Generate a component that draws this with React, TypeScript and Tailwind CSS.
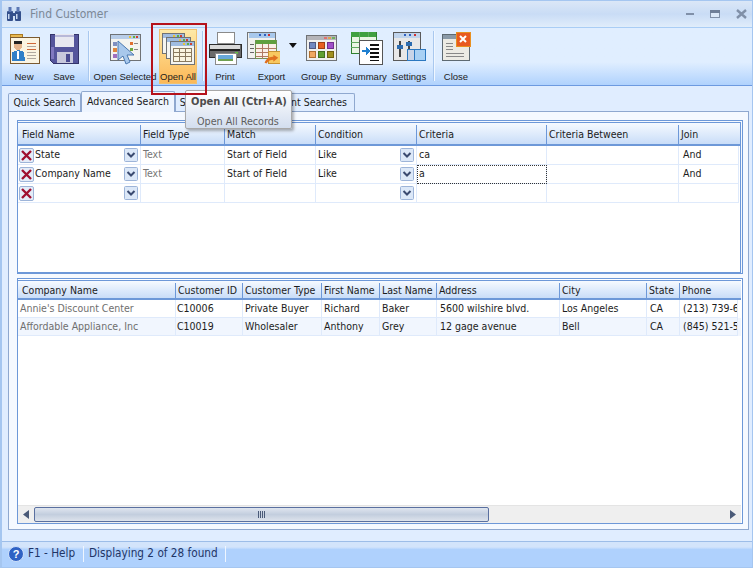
import React from "react";

const Shadowed = ({ children }: { children: React.ReactNode }) => (
  <svg width="34" height="34" viewBox="0 0 34 34" shapeRendering="crispEdges">{children}</svg>
);

const WinFrame = ({ x = 2, y = 3, w = 28, h = 26, bar = "#9db8dc" }: { x?: number; y?: number; w?: number; h?: number; bar?: string }) => (
  <g>
    <rect x={x} y={y} width={w} height={h} fill="#f4f4f0" stroke="#6f7275" />
    <rect x={x + 1} y={y + 1} width={w - 1} height={4} fill={bar} />
    <rect x={x + w - 11} y={y + 2} width={2} height={2} fill="#e8c23a" />
    <rect x={x + w - 7} y={y + 2} width={2} height={2} fill="#60b040" />
    <rect x={x + w - 4} y={y + 2} width={2} height={2} fill="#d04030" />
  </g>
);

const NewIcon = () => (
  <Shadowed>
    <rect x="3" y="3" width="12" height="5" fill="#e8b850" stroke="#a87820" />
    <rect x="3" y="6" width="29" height="26" fill="#fbf4e2" stroke="#7b5a30" />
    <circle cx="11" cy="15" r="4" fill="#e4b48c" />
    <rect x="7" y="10" width="8" height="3" fill="#222" />
    <path d="M5 30 L5 21 L11 19 L17 21 L18 30Z" fill="#2f7fc8" />
    <rect x="10" y="20" width="2" height="8" fill="#fff" />
    <rect x="20" y="12" width="9" height="1" fill="#d06838" />
    <rect x="20" y="15" width="9" height="1" fill="#b0a8a0" />
    <rect x="20" y="18" width="9" height="1" fill="#d06838" />
    <rect x="20" y="21" width="9" height="1" fill="#b0a8a0" />
    <rect x="20" y="24" width="9" height="1" fill="#b0a8a0" />
    <rect x="20" y="27" width="9" height="1" fill="#b0a8a0" />
  </Shadowed>
);

const SaveIcon = () => (
  <Shadowed>
    <path d="M3 3 H31 V32 H6 L3 29Z" fill="#55559c" stroke="#34346a" />
    <rect x="8" y="3" width="19" height="13" fill="#e8e8f0" />
    <rect x="8" y="4" width="19" height="2" fill="#b8b8d8" />
    <rect x="10" y="21" width="16" height="11" fill="#c8c8dc" />
    <rect x="19" y="23" width="4" height="8" fill="#4a4a90" />
    <rect x="4" y="16" width="3" height="12" fill="#8078c0" />
  </Shadowed>
);

const OpenSelectedIcon = () => (
  <Shadowed>
    <WinFrame x={2} y={3} w={30} h={26} bar="#b8cde8" />
    <rect x="5" y="11" width="4" height="4" fill="#8090c0" />
    <rect x="5" y="17" width="4" height="4" fill="#e08840" />
    <rect x="5" y="23" width="4" height="4" fill="#a070c0" />
    <rect x="22" y="11" width="3" height="3" fill="#e07030" />
    <rect x="26" y="12" width="4" height="1" fill="#888" />
    <rect x="22" y="17" width="3" height="3" fill="#70a840" />
    <rect x="26" y="18" width="4" height="1" fill="#888" />
    <path d="M10 10 L10 29 L15 25 L18 33 L22 31 L19 24 L26 24 Z" fill="#a8c8ec" stroke="#4a78b0" shapeRendering="auto" />
  </Shadowed>
);

const OpenAllIcon = () => (
  <Shadowed>
    <WinFrame x={1} y={1} w={22} h={20} bar="#a0bce0" />
    <WinFrame x={5} y={5} w={24} h={21} bar="#a0bce0" />
    <g>
      <WinFrame x={9} y={9} w={24} h={23} bar="#a0bce0" />
      <rect x="12" y="16" width="18" height="13" fill="#fbf5e0" stroke="#8a7a60" />
      <path d="M12 20.5 H30 M12 24.5 H30 M18.5 16 V29 M24.5 16 V29" stroke="#8a7a60" />
    </g>
  </Shadowed>
);

const PrintIcon = () => (
  <Shadowed>
    <rect x="9" y="1" width="17" height="11" fill="#fff" stroke="#8a8a8a" />
    <path d="M1 13 H33 V26 H1Z" fill="#6a6a6a" stroke="#2c2c2c" />
    <rect x="2" y="14" width="30" height="4" fill="#d8d8d8" />
    <rect x="2" y="18" width="30" height="2" fill="#222" />
    <rect x="27" y="21" width="3" height="2" fill="#60c040" />
    <rect x="7" y="22" width="21" height="11" fill="#fff" stroke="#8a8a8a" />
    <rect x="10" y="24" width="15" height="6" fill="#68a8d8" />
    <rect x="10" y="28" width="15" height="2" fill="#70a050" />
  </Shadowed>
);

const ExportIcon = () => (
  <Shadowed>
    <rect x="1" y="1" width="28" height="27" fill="#f0f0ee" stroke="#6f7275" />
    <rect x="2" y="2" width="27" height="5" fill="#a8c8ec" />
    <rect x="12" y="3" width="2" height="2" fill="#3060c0" />
    <rect x="17" y="3" width="2" height="2" fill="#3060c0" />
    <rect x="22" y="3" width="2" height="2" fill="#d03030" />
    <rect x="3" y="13" width="4" height="1" fill="#666" />
    <rect x="3" y="17" width="4" height="1" fill="#666" />
    <rect x="3" y="21" width="4" height="1" fill="#666" />
    <rect x="9" y="9" width="21" height="19" fill="#faf0e8" stroke="#6e8f50" />
    <rect x="9" y="9" width="21" height="4" fill="#60a040" />
    <path d="M9 17.5 H30 M9 21.5 H30 M9 25.5 H30 M15.5 13 V28 M22.5 13 V28" stroke="#b07860" />
    <rect x="22" y="21" width="12" height="12" fill="#f8c860" stroke="#c89030" />
    <path d="M18 32 C20 27 24 26 27 26 L27 24 L32 27 L27 31 L27 29 C24 29 22 30 20 33Z" fill="#e07020" shapeRendering="auto" />
  </Shadowed>
);

const GroupByIcon = () => (
  <Shadowed>
    <rect x="2" y="4" width="30" height="25" fill="#f0f0ee" stroke="#6f7275" />
    <rect x="3" y="5" width="29" height="4" fill="#b4b4b8" />
    <rect x="20" y="6" width="3" height="2" fill="#e07070" />
    <rect x="24" y="6" width="3" height="2" fill="#e0a050" />
    <rect x="28" y="6" width="3" height="2" fill="#70b060" />
    <rect x="5" y="11" width="6" height="6" fill="#7088c0" stroke="#505880" />
    <rect x="14" y="11" width="6" height="6" fill="#e86020" stroke="#a04010" />
    <rect x="23" y="11" width="6" height="6" fill="#a050c8" stroke="#703090" />
    <rect x="5" y="20" width="6" height="6" fill="#f0a860" stroke="#b07030" />
    <rect x="14" y="20" width="6" height="6" fill="#60a030" stroke="#407020" />
    <rect x="23" y="20" width="6" height="6" fill="#a09020" stroke="#706010" />
  </Shadowed>
);

const SummaryIcon = () => (
  <Shadowed>
    <rect x="1" y="1" width="25" height="21" fill="#eaf5e4" stroke="#308030" />
    <rect x="1" y="1" width="25" height="5" fill="#40a040" />
    <path d="M1 11 H26 M1 16 H26 M9 1 V22 M18 1 V6" stroke="#60a860" />
    <rect x="9" y="9" width="23" height="24" fill="#fff" stroke="#555" />
    <rect x="20" y="13" width="9" height="2" fill="#111" />
    <rect x="20" y="17" width="9" height="2" fill="#111" />
    <rect x="20" y="21" width="9" height="2" fill="#111" />
    <rect x="20" y="25" width="9" height="2" fill="#111" />
    <rect x="20" y="29" width="9" height="1" fill="#111" />
    <rect x="12" y="19" width="7" height="2" fill="#2080d0" />
    <path d="M16 16 L20 20 L16 24Z" fill="#2080d0" />
  </Shadowed>
);

const SettingsIcon = () => (
  <Shadowed>
    <rect x="1" y="1" width="27" height="28" fill="#e8e8e8" stroke="#5a5a5a" />
    <rect x="2" y="2" width="26" height="5" fill="#c0d4ec" />
    <rect x="12" y="3" width="2" height="2" fill="#3060c0" />
    <rect x="17" y="3" width="2" height="2" fill="#3060c0" />
    <rect x="22" y="3" width="2" height="2" fill="#d03030" />
    <rect x="7" y="10" width="2" height="16" fill="#444" />
    <rect x="16" y="10" width="2" height="16" fill="#444" />
    <rect x="5" y="14" width="6" height="4" fill="#2c6cb0" />
    <rect x="14" y="11" width="6" height="4" fill="#2c6cb0" />
    <rect x="15" y="18" width="18" height="11" fill="#a8d0f4" stroke="#2c78c0" />
    <rect x="15" y="18" width="7" height="11" fill="#c8d4e8" stroke="#2c78c0" />
  </Shadowed>
);

const CloseIcon = () => (
  <Shadowed>
    <rect x="3" y="3" width="27" height="26" fill="#ecebe4" stroke="#5e6a72" />
    <rect x="4" y="4" width="26" height="4" fill="#8a9aa8" />
    <rect x="7" y="12" width="7" height="1" fill="#888" />
    <rect x="7" y="15" width="7" height="1" fill="#888" />
    <rect x="7" y="18" width="7" height="1" fill="#888" />
    <rect x="7" y="22" width="18" height="1" fill="#888" />
    <rect x="7" y="25" width="18" height="1" fill="#888" />
    <rect x="17" y="1" width="14" height="14" fill="#e85a20" stroke="#e89020" />
    <path d="M21 5 L27 11 M27 5 L21 11" stroke="#fff" strokeWidth="2" shapeRendering="auto" />
  </Shadowed>
);

const labelFont = "font-['Liberation_Sans',sans-serif] text-[9.5px] leading-[13px] whitespace-nowrap";

const ToolBtn = ({ label, w, children, extra = "" }: { label: string; w: string; children: React.ReactNode; extra?: string }) => (
  <div className={`${w} ${extra} h-[56px] flex flex-col items-center shrink-0`}>
    <div className="h-[42px] flex items-start pt-[3px]">{children}</div>
    <span className={labelFont}>{label}</span>
  </div>
);

const Sep = () => <div className="w-[2px] h-[50px] bg-[#a9c8ef] border-r border-[#f0f7ff] shrink-0 mt-[3px]" />;

const Del = () => (
  <svg width="15" height="15" viewBox="0 0 15 15" className="shrink-0">
    <rect x="0.5" y="0.5" width="14" height="14" rx="1.5" fill="#e4ecf8" stroke="#9db4d8" />
    <path d="M3 3 L12 12 M12 3 L3 12" stroke="#a01030" strokeWidth="2.4" />
  </svg>
);

const Drop = () => (
  <svg width="14" height="14" viewBox="0 0 14 14" className="shrink-0">
    <rect x="0.5" y="0.5" width="13" height="13" rx="1" fill="#dce8f8" stroke="#9db4d8" />
    <path d="M3.5 5 L7 8.5 L10.5 5" fill="none" stroke="#3a4a70" strokeWidth="2" />
  </svg>
);

const Head = ({ children, last }: { children?: React.ReactNode; last?: boolean }) => (
  <div className={`pl-[2px] first:pl-[4px] flex items-center whitespace-nowrap overflow-hidden ${last ? "" : "border-r border-[#6d98d8]"}`}>{children}</div>
);

const Cell = ({ children, tone = "pl-[2px]", focus }: { children?: React.ReactNode; tone?: string; focus?: boolean }) => (
  <div className={`flex items-center justify-between whitespace-nowrap overflow-hidden border-r border-b border-[#dfeafb] ${tone} ${focus ? "outline-1 outline-dotted outline-[#333] -outline-offset-1" : ""}`}>
    {children}
  </div>
);

const criteriaCols = "grid grid-cols-[123px_84px_91px_101px_130px_132px_60px]";
const resultCols = "grid grid-cols-[158px_67px_79px_58px_57px_123px_87px_33px_58px]";

const CriteriaRow = ({ field, type, match, cond, crit, join, focus }: { field?: string; type?: string; match?: string; cond?: string; crit?: string; join?: string; focus?: boolean }) => (
  <div className={`${criteriaCols} h-[19px]`}>
    <Cell tone="pl-[1px]">
      <span className="flex items-center gap-px"><Del />{field}</span>
      <span className="mr-[2px]"><Drop /></span>
    </Cell>
    <Cell tone="text-[#777777] pl-[2px]">{type}</Cell>
    <Cell>{match}</Cell>
    <Cell>
      <span>{cond}</span>
      <span className="mr-[2px]"><Drop /></span>
    </Cell>
    <Cell focus={focus}>{crit}</Cell>
    <Cell />
    <Cell tone="pl-[4px]">{join}</Cell>
  </div>
);

const ResultRow = ({ v, alt }: { v: string[]; alt?: boolean }) => (
  <div className={`${resultCols} h-[18px] ${alt ? "bg-[#f1f6fe]" : "bg-white"}`}>
    {v.map((t, i) => (
      <Cell key={i} tone={i === 0 ? "text-[#6f6f6f] pl-[2px]" : i === 1 ? "pl-[1px]" : i === 5 || i >= 7 ? "pl-[3px]" : "pl-[2px]"}>{t}</Cell>
    ))}
  </div>
);

const Tab = ({ label, w, active }: { label: string; w: string; active?: boolean }) =>
  active ? (
    <div className={`${w} h-[21px] mb-[-1px] pb-[1px] relative z-10 bg-[#eef5ff] border border-b-0 border-[#8fa8cf] rounded-t-[2px] flex items-center justify-center`}>{label}</div>
  ) : (
    <div className={`${w} h-[18px] pt-[1px] bg-[#e0edff] border border-b-0 border-[#8fa8cf] rounded-t-[2px] flex items-center justify-center whitespace-nowrap`}>{label}</div>
  );

export default function App() {
  return (
    <div className="w-[755px] h-[569px] relative overflow-hidden bg-white text-[10.5px] text-[#1c1c1c] font-['DejaVu_Sans_Condensed','DejaVu_Sans',sans-serif]">
      <div className="w-[753px] h-[568px] border-t border-r border-b border-l-2 border-[#a5c6f0] flex flex-col bg-[#e0edff]">
        {/* Title bar */}
        <div className="h-[27px] shrink-0 bg-gradient-to-b from-[#dbe7f7] via-[#c9dcf5] to-[#e0edfb] flex items-center justify-between pl-[3px] pr-[5px] border-b border-[#a9cdf5]">
          <div className="flex items-center gap-[7px]">
            <svg width="18" height="16" viewBox="0 0 18 16">
              <rect x="2" y="5" width="6" height="10" rx="1" fill="#34508c" />
              <rect x="10" y="5" width="6" height="10" rx="1" fill="#34508c" />
              <rect x="3.5" y="1" width="3" height="5" fill="#5c78b4" />
              <rect x="11.5" y="1" width="3" height="5" fill="#5c78b4" />
              <rect x="8" y="7" width="2" height="3" fill="#34508c" />
              <rect x="3" y="8" width="1.5" height="5" fill="#c8d8f0" />
              <rect x="11" y="8" width="1.5" height="5" fill="#c8d8f0" />
            </svg>
            <span className="text-[12px] text-[#7c8896]">Find Customer</span>
          </div>
          <div className="flex items-center gap-[16px]">
            <svg width="8" height="8" viewBox="0 0 8 8" shapeRendering="crispEdges"><rect x="0" y="3" width="8" height="2" fill="#8090a8" /></svg>
            <svg width="10" height="9" viewBox="0 0 10 9" shapeRendering="crispEdges"><rect x="0.5" y="0.5" width="9" height="7" fill="#dbe8f8" stroke="#8090a8" /><rect x="0" y="0" width="10" height="2.5" fill="#6f7f98" /></svg>
            <svg width="11" height="10" viewBox="0 0 11 10"><path d="M1 1 L10 9 M10 1 L1 9" stroke="#8090a8" strokeWidth="2.4" /></svg>
          </div>
        </div>

        {/* Toolbar */}
        <div className="h-[58px] shrink-0 bg-gradient-to-b from-[#e0eeff] from-60% to-[#b0d2fd] border-b border-[#6d9ae0] flex items-start pl-[3px]">
          <ToolBtn label="New" w="w-[38px]"><NewIcon /></ToolBtn>
          <ToolBtn label="Save" w="w-[38px]" extra="ml-[2px]"><SaveIcon /></ToolBtn>
          <div className="ml-[5px]"><Sep /></div>
          <ToolBtn label="Open Selected" w="w-[62px]" extra="ml-[4px]"><OpenSelectedIcon /></ToolBtn>
          <div className="w-[38px] h-[55px] ml-[3px] mt-[1px] shrink-0 bg-gradient-to-b from-[#fde9a8] via-[#fdd07c] to-[#fbb858] border border-[#f0c070] flex flex-col items-center">
            <div className="h-[40px] flex items-start pt-[2px]"><OpenAllIcon /></div>
            <span className={labelFont}>Open All</span>
          </div>
          <div className="ml-[5px]"><Sep /></div>
          <ToolBtn label="Print" w="w-[36px]" extra="ml-[3px]"><PrintIcon /></ToolBtn>
          <div className="w-[50px] ml-[4px] h-[56px] shrink-0 flex flex-col">
            <div className="h-[42px] flex items-start pt-[3px] gap-[9px]">
              <ExportIcon />
              <svg width="8" height="5" viewBox="0 0 8 5" className="mt-[12px]"><path d="M0 0 H8 L4 5Z" fill="#111" /></svg>
            </div>
            <span className={`${labelFont} text-center w-[49px]`}>Export</span>
          </div>
          <ToolBtn label="Group By" w="w-[42px]" extra="ml-[3px]"><GroupByIcon /></ToolBtn>
          <ToolBtn label="Summary" w="w-[43px]" extra="ml-[3px]"><SummaryIcon /></ToolBtn>
          <ToolBtn label="Settings" w="w-[38px]" extra="ml-[2px]"><SettingsIcon /></ToolBtn>
          <div className="ml-[5px]"><Sep /></div>
          <ToolBtn label="Close" w="w-[36px]" extra="ml-[3px]"><CloseIcon /></ToolBtn>
        </div>

        {/* Tabs + panel */}
        <div className="flex-1 min-h-0 flex flex-col pl-[6px] pr-[3px] pt-[5px]">
          <div className="flex items-end h-[20px] shrink-0">
            <Tab label="Quick Search" w="w-[73px]" />
            <Tab label="Advanced Search" w="w-[94px]" active />
            <Tab label="Saved Searches" w="w-[85px]" />
            <Tab label="Recent Searches" w="w-[95px]" />
          </div>
          <div className="h-[419px] shrink-0 border border-[#8fa8cf] bg-[#f5f9ff] pt-[8px] pl-[8px] pr-[5px]">
            {/* Criteria grid */}
            <div className="h-[154px] border border-[#6d98d8] pt-px pr-px bg-[#f5f9ff]">
              <div className="h-full bg-white border-r border-b border-[#6d98d8] overflow-hidden">
                <div className={`${criteriaCols} h-[24px] pt-[2px] bg-gradient-to-b from-[#f6faff] to-[#c9ddf8] border-b-2 border-t border-[#6d98d8]`}>
                  <Head>Field Name</Head>
                  <Head>Field Type</Head>
                  <Head>Match</Head>
                  <Head>Condition</Head>
                  <Head>Criteria</Head>
                  <Head>Criteria Between</Head>
                  <Head last>Join</Head>
                </div>
                <CriteriaRow field="State" type="Text" match="Start of Field" cond="Like" crit="ca" join="And" />
                <CriteriaRow field="Company Name" type="Text" match="Start of Field" cond="Like" crit="a" join="And" focus />
                <CriteriaRow />
              </div>
            </div>
            {/* Results grid */}
            <div className="h-[246px] mt-[4px] border border-[#6d98d8] pt-px pr-px flex flex-col bg-white">
              <div className="flex-1 min-h-0 flex flex-col overflow-hidden">
                <div className={`${resultCols} h-[20px] shrink-0 pt-[2px] bg-gradient-to-b from-[#f6faff] to-[#c9ddf8] border-t border-b-2 border-[#6d98d8]`}>
                  {["Company Name", "Customer ID", "Customer Type", "First Name", "Last Name", "Address", "City", "State", "Phone"].map((h, i) => (
                    <Head key={h} last={i === 8}>{h}</Head>
                  ))}
                </div>
                <ResultRow v={["Annie's Discount Center", "C10006", "Private Buyer", "Richard", "Baker", "5600 wilshire blvd.", "Los Angeles", "CA", "(213) 739-6"]} />
                <ResultRow alt v={["Affordable Appliance, Inc", "C10019", "Wholesaler", "Anthony", "Grey", "12 gage avenue", "Bell", "CA", "(845) 521-5"]} />
                <div className="flex-1 bg-white" />
                <div className="h-[18px] shrink-0 bg-[#efefef] border-t border-[#e4e4e4] flex items-center pl-[5px] pr-[5px]">
                  <svg width="6" height="9" viewBox="0 0 6 9" className="shrink-0"><path d="M6 0 V9 L0 4.5Z" fill="#4a5a78" /></svg>
                  <div className="w-[455px] h-[15px] ml-[5px] shrink-0 rounded-[2px] border border-[#5a70a0] bg-gradient-to-b from-[#dfe5ef] via-[#c3cede] to-[#dde3ec] flex items-center justify-center gap-px">
                    <span className="w-px h-[7px] bg-[#4a5a78]" />
                    <span className="w-px h-[7px] bg-[#4a5a78]" />
                    <span className="w-px h-[7px] bg-[#4a5a78]" />
                    <span className="w-px h-[7px] bg-[#4a5a78]" />
                  </div>
                  <div className="flex-1" />
                  <svg width="6" height="9" viewBox="0 0 6 9" className="shrink-0"><path d="M0 0 V9 L6 4.5Z" fill="#4a5a78" /></svg>
                </div>
              </div>
            </div>
          </div>
        </div>

        {/* Status bar */}
        <div className="h-[26px] shrink-0 pb-[2px] border-t border-[#9dbde8] bg-gradient-to-b from-[#d3e4fb] from-20% to-[#afd1fd] to-30% flex items-center pl-[6px] text-[11.7px] text-[#1f3566]">
          <svg width="16" height="16" viewBox="0 0 16 16" className="shrink-0">
            <circle cx="8" cy="8" r="7.5" fill="#2f62c4" stroke="#cfe0fa" />
            <text x="8" y="12" textAnchor="middle" fontSize="11" fontWeight="700" fill="#fff" fontFamily="Liberation Sans">?</text>
          </svg>
          <span className="ml-[4px] w-[55px]">F1 - Help</span>
          <span className="w-px h-[16px] bg-[#eef5ff]" />
          <span className="ml-[5px] w-[136px] whitespace-nowrap">Displaying 2 of 28 found</span>
          <span className="w-px h-[16px] bg-[#eef5ff]" />
        </div>
      </div>

      {/* Tooltip */}
      <div className="absolute left-[185px] top-[90px] w-[107px] h-[39px] z-20 border border-[#a8a8a8] rounded-[2px] bg-gradient-to-b from-white to-[#d3deef] shadow-[2px_2px_3px_rgba(0,0,0,0.3)] text-[#4c4c4c]">
        <div className="pl-[5px] pt-[3px] text-[11px] font-bold whitespace-nowrap">Open All (Ctrl+A)</div>
        <div className="pl-[11px] pt-[3px] text-[10.7px] whitespace-nowrap text-[#5e5e5e]">Open All Records</div>
      </div>
      {/* Red highlight */}
      <div className="absolute left-[151px] top-[23px] w-[56px] h-[72px] z-30 border-2 border-[#b5121b]" />
    </div>
  );
}
